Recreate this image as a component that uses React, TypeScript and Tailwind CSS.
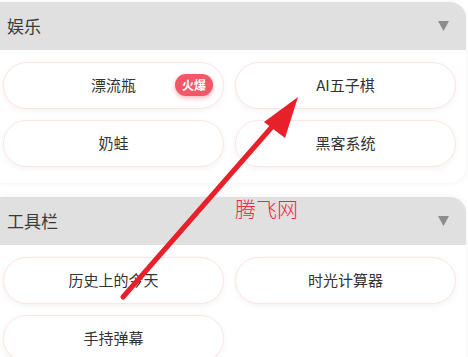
const sections = [
  {
    title: "娱乐",
    items: [
      { name: "漂流瓶", hot: true },
      { name: "AI五子棋" },
      { name: "奶蛙" },
      { name: "黑客系统" },
    ],
  },
  {
    title: "工具栏",
    items: [{ name: "历史上的今天" }, { name: "时光计算器" }, { name: "手持弹幕" }],
  },
];

const font = { fontFamily: '"Noto Sans CJK SC", "Noto Sans", sans-serif' };

const Section = ({ title, items }: { title: string; items: { name: string; hot?: boolean }[] }) => {
  return (
    <div className="w-[466px] rounded-r-2xl bg-white shadow-[0_0_6px_rgba(0,0,0,0.06)] overflow-hidden">
      {/* header */}
      <div className="h-[48px] bg-[#e0e0e0] flex items-center justify-between pl-[7px] pr-[17px]">
        <span className="text-[17px] text-[#3a3a3a]">{title}</span>
        <svg width="11" height="10" viewBox="0 0 11 10">
          <polygon points="0,0 11,0 5.5,10" fill="#8c8c8c" />
        </svg>
      </div>
      <div className="grid grid-cols-2 gap-[11px] pl-[3px] pr-[10px] pt-[12px] pb-[16px]">
        {items.map((it) => (
          <div
            key={it.name}
            className="relative h-[47px] rounded-full border border-[#fde4e4] bg-white shadow-[0_2px_6px_rgba(0,0,0,0.05)] flex items-center justify-center"
          >
            <span className="text-[15px] text-[#333]">{it.name}</span>
            {it.hot && (
              <span className="absolute right-[10px] top-[11px] h-[22px] px-[7px] rounded-full bg-[#f25767] text-white text-[12px] font-bold flex items-center shadow-[0_2px_5px_rgba(242,87,103,0.45)]">
                火爆
              </span>
            )}
          </div>
        ))}
      </div>
    </div>
  );
};

export default function App() {
  return (
    <div className="relative w-[468px] h-[357px] overflow-hidden bg-white pt-[2px]" style={font}>
      <div className="flex flex-col gap-[14px]">
        {sections.map((s) => (
          <Section key={s.title} title={s.title} items={s.items} />
        ))}
      </div>

      {/* watermark */}
      <span className="absolute left-[235px] top-[198px] text-[21px] font-light text-[#ec2a45] leading-none">
        腾飞网
      </span>

      {/* annotation arrow */}
      <svg className="absolute left-0 top-0 pointer-events-none" width="468" height="357">
        <line x1="123" y1="297" x2="278" y2="120" stroke="#e8202a" strokeWidth="5" strokeLinecap="round" />
        <polygon points="298,97 264,122 285,138" fill="#e8202a" />
      </svg>
    </div>
  );
}
